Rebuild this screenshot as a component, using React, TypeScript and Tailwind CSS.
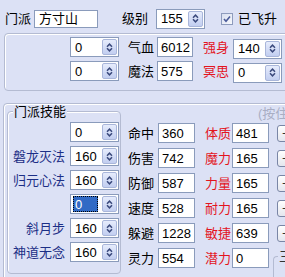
import React from "react";

function SpinBtn() {
  return (
    <div className="ml-auto mr-[1px] flex h-[16px] w-[15px] shrink-0 items-center justify-center rounded-[2px] border border-[#a9b6da] bg-gradient-to-b from-[#e6ecfc] to-[#c2cef0]">
      <svg width="7" height="9" viewBox="0 0 7 9">
        <path d="M1 3.8 L3.5 1.2 L6 3.8 M1 5.2 L3.5 7.8 L6 5.2" fill="none" stroke="#3b4a7d" strokeWidth="1.5" />
      </svg>
    </div>
  );
}

function Spin({ value, focused }: { value: string; focused?: boolean }) {
  return (
    <div className="flex h-[20px] w-[49px] shrink-0 items-center border border-[#8a9bbb] bg-white">
      {focused ? (
        <span className="ml-[2px] flex h-[16px] w-[25px] items-center border border-dotted border-black bg-[#316ac5] pl-[1px] text-white">
          {value}
        </span>
      ) : (
        <span className="pl-[4px]">{value}</span>
      )}
      <SpinBtn />
    </div>
  );
}

function Field({ value, w }: { value: string; w: string }) {
  return (
    <div className={`flex h-[20px] ${w} shrink-0 items-center border border-[#8a9bbb] bg-white pl-[3px]`}>
      {value}
    </div>
  );
}

function PlusBtn() {
  return (
    <div className="ml-[8px] flex h-[17px] w-[18px] shrink-0 items-center justify-center rounded-[3px] border border-[#7a86a6] bg-gradient-to-b from-[#ffffff] to-[#e4e6ee] text-[14px] text-[#333]">
      +
    </div>
  );
}

const stats: [string, string, string, string, boolean][] = [
  ["命中", "360", "体质", "481", true],
  ["伤害", "742", "魔力", "165", true],
  ["防御", "587", "力量", "165", true],
  ["速度", "528", "耐力", "165", true],
  ["躲避", "1228", "敏捷", "639", true],
  ["灵力", "554", "潜力", "0", false],
];

const skills: [string, string, boolean][] = [
  ["", "0", false],
  ["磐龙灭法", "160", false],
  ["归元心法", "160", false],
  ["", "0", true],
  ["斜月步", "160", false],
  ["神道无念", "160", false],
];

export default function App() {
  return (
    <div className="relative h-[277px] w-[285px] overflow-hidden whitespace-nowrap bg-[#dce1f5] font-['Liberation_Sans','Noto_Sans_CJK_SC',sans-serif] text-[13px] leading-none text-black">
      {/* top row */}
      <div className="mt-[9px] flex h-[19px] items-center">
        <span className="ml-[5px] w-[26px]">门派</span>
        <div className="ml-[3px] flex h-[18px] w-[64px] items-center border border-[#8a9bbb] bg-white pl-[4px]">方寸山</div>
        <span className="ml-[24px] w-[26px]">级别</span>
        <div className="ml-[8px]">
          <Spin value="155" />
        </div>
        <div className="ml-[16px] flex h-[12px] w-[12px] items-center justify-center border border-[#8e9bbd] bg-gradient-to-br from-[#d9dff0] to-[#f7f8fc]">
          <svg width="8" height="8" viewBox="0 0 8 8">
            <path d="M1 4 L3 6.2 L7 1.5" fill="none" stroke="#4a5a99" strokeWidth="1.6" />
          </svg>
        </div>
        <span className="ml-[5px]">已飞升</span>
      </div>

      {/* group 1 */}
      <div className="ml-[4px] mt-[5px] h-[58px] w-[300px] rounded-[4px] border border-[#b4bbd2] shadow-[inset_1px_1px_0_#ffffff]">
        <div className="flex flex-col gap-[4px] pt-[3px]">
          {[
            ["0", "气血", "6012", "强身", "140"],
            ["0", "魔法", "575", "冥思", "0"],
          ].map((r, i) => (
            <div key={i} className="flex h-[20px] items-center">
              <div className="ml-[65px]">
                <Spin value={r[0]} />
              </div>
              <span className="ml-[9px] w-[26px]">{r[1]}</span>
              <div className="ml-[3px]">
                <Field value={r[2]} w="w-[36px]" />
              </div>
              <span className="ml-[10px] w-[26px] text-[#e3141e]">{r[3]}</span>
              <div className="ml-[4px] mt-[3px]">
                <Spin value={r[4]} />
              </div>
            </div>
          ))}
        </div>
      </div>

      {/* group 2 outer */}
      <div className="ml-[3px] mt-[12px] flex h-[200px] w-[300px] rounded-tl-[4px] border border-[#b4bbd2] shadow-[inset_1px_1px_0_#ffffff]">
        {/* 门派技能 */}
        <div className="relative ml-[3px] mt-[7px] h-[163px] w-[114px] shrink-0 rounded-[4px] border border-[#b4bbd2] shadow-[inset_1px_1px_0_#ffffff]">
          <span className="absolute -top-[7px] left-[5px] bg-[#dce1f5] px-[1px]">门派技能</span>
          <div className="flex flex-col gap-[4px] pr-[1px] pt-[10px]">
            {skills.map(([n, v, f], i) => (
              <div key={i} className="flex h-[20px] items-center justify-end">
                <span className="mr-[5px] text-[#1c2f86]">{n}</span>
                <Spin value={v} focused={f} />
              </div>
            ))}
          </div>
        </div>

        {/* stats */}
        <div className="ml-[7px] flex flex-col">
          <div className="flex h-[19px] items-center">
            <span className="ml-[130px] text-[#a9aec4]">(按住</span>
          </div>
          <div className="flex flex-col gap-[5px]">
            {stats.map(([a, av, b, bv, plus], i) => (
              <div key={i} className="flex h-[20px] items-center">
                <span className="w-[27px]">{a}</span>
                <div className="ml-[3px]">
                  <Field value={av} w="w-[37px]" />
                </div>
                <span className="ml-[10px] w-[27px] text-[#e3141e]">{b}</span>
                <Field value={bv} w="w-[37px]" />
                {plus ? (
                  <PlusBtn />
                ) : (
                  <div className="relative ml-[4px] mt-[8px] h-[30px] w-[30px] self-start rounded-tl-[4px] border-l border-t border-[#b4bbd2]">
                    <span className="absolute -top-[7px] left-[4px] bg-[#dce1f5] px-[1px] text-[#333]">三</span>
                  </div>
                )}
              </div>
            ))}
          </div>
        </div>
      </div>
    </div>
  );
}
